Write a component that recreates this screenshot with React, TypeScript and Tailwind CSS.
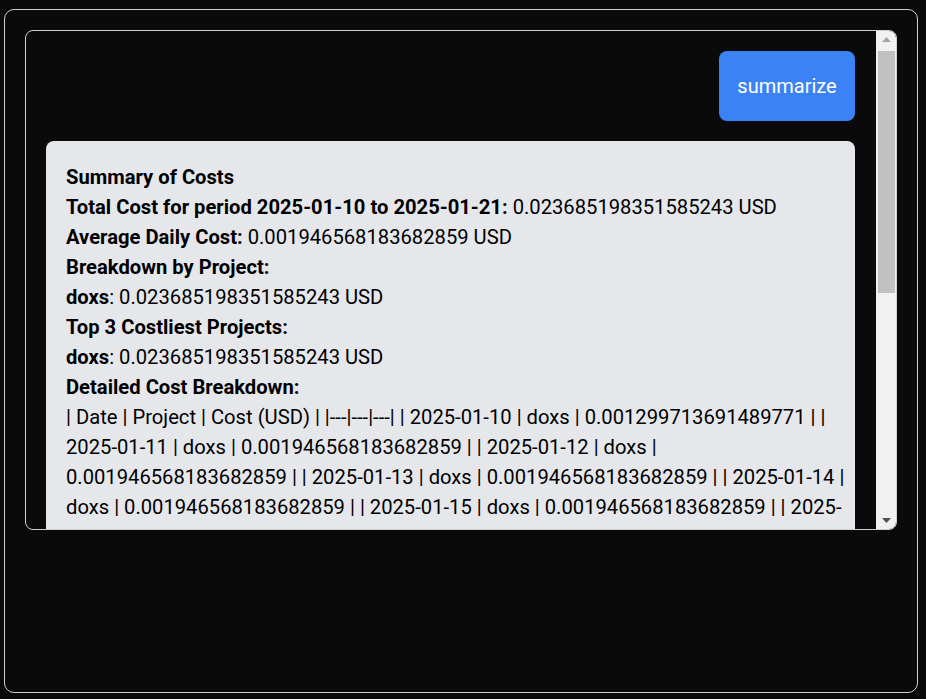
import React from 'react';

const LINES: React.ReactNode[] = [
  <b>Summary of Costs</b>,
  <><b>Total Cost for period 2025-01-10 to 2025-01-21:</b> 0.023685198351585243 USD</>,
  <><b>Average Daily Cost:</b> 0.001946568183682859 USD</>,
  <b>Breakdown by Project:</b>,
  <><b>doxs</b>: 0.023685198351585243 USD</>,
  <b>Top 3 Costliest Projects:</b>,
  <><b>doxs</b>: 0.023685198351585243 USD</>,
  <b>Detailed Cost Breakdown:</b>,
  '| Date | Project | Cost (USD) | |---|---|---| | 2025-01-10 | doxs | 0.001299713691489771 | |',
  '2025-01-11 | doxs | 0.001946568183682859 | | 2025-01-12 | doxs |',
  '0.001946568183682859 | | 2025-01-13 | doxs | 0.001946568183682859 | | 2025-01-14 |',
  'doxs | 0.001946568183682859 | | 2025-01-15 | doxs | 0.001946568183682859 | | 2025-',
];

const Scrollbar: React.FC = () => (
  <div className="w-[20px] shrink-0 bg-[#f1f1f1] flex flex-col items-center">
    <div className="h-[17px] w-full flex items-center justify-center">
      <svg width="9" height="5" viewBox="0 0 9 5"><path d="M0 5 L4.5 0 L9 5 Z" fill="#a3a3a3" /></svg>
    </div>
    <div className="mt-[3px] w-[17px] h-[242px] bg-[#c1c1c1]" />
    <div className="flex-1" />
    <div className="h-[17px] w-full flex items-center justify-center">
      <svg width="9" height="5" viewBox="0 0 9 5"><path d="M0 0 L9 0 L4.5 5 Z" fill="#505050" /></svg>
    </div>
  </div>
);

export default function App() {
  return (
    <div
      className="h-screen overflow-hidden bg-[#0a0a0a] pt-[9px] pl-[4px]"
      style={{ fontFamily: 'Roboto, "Noto Sans", sans-serif' }}
    >
      <div className="w-[914px] h-[684px] rounded-[10px] border border-[#cfcfcf] p-5">
        <div className="h-[500px] rounded-lg border border-[#cfcfcf] flex overflow-hidden">
          <div className="flex-1 overflow-hidden pt-5 pl-5 pr-[21px] flex flex-col gap-5">
            <div className="flex justify-end">
              <button className="w-[136px] h-[70px] rounded-lg bg-[#3b82f6] text-white text-[20px] leading-[30px] flex items-center justify-center">
                summarize
              </button>
            </div>
            <div className="bg-[#e5e7eb] rounded-lg pt-[21px] px-5 pb-8 text-[20.2px] leading-[30px] text-black">
              {LINES.map((l, i) => (
                <div key={i} className="whitespace-nowrap">{l}</div>
              ))}
            </div>
          </div>
          <Scrollbar />
        </div>
      </div>
    </div>
  );
}
